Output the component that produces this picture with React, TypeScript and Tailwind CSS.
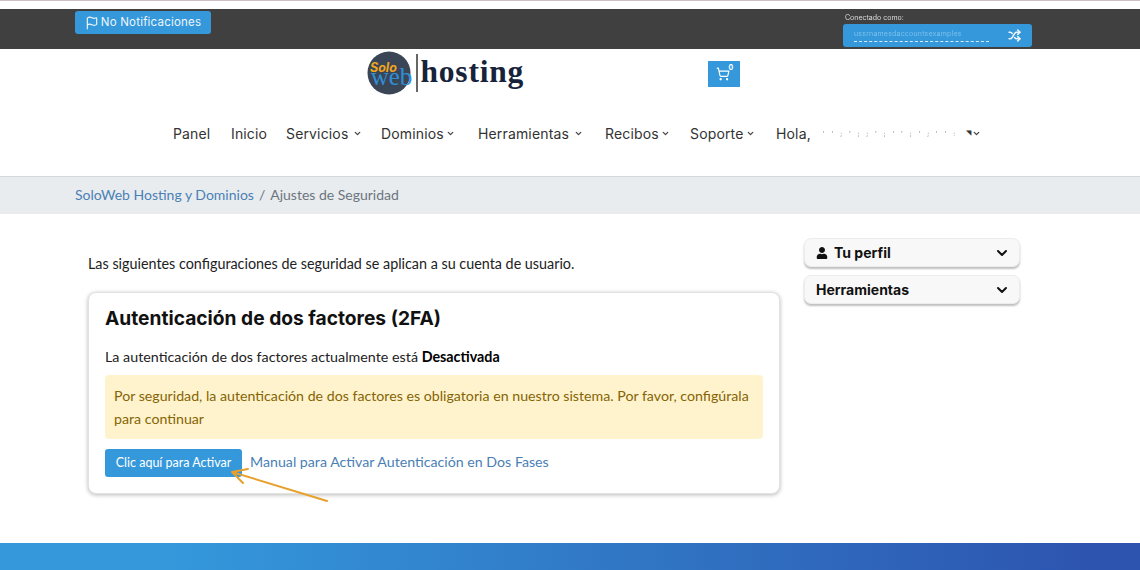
import React from "react";
import { ChevronDown, Flag, Shuffle, ShoppingCart } from "lucide-react";
import { FaUser } from "react-icons/fa";

const Caret = () => (
  <ChevronDown className="w-[9px] h-[9px] text-[#444] shrink-0" strokeWidth={3.5} />
);

/////////////////////////////////////
// COMPONENT: TOP BAR
/////////////////////////////////////

const TopBar = () => (
  <div className="h-[40px] bg-[#404040] flex justify-between pl-[75px] pr-[108px] shrink-0">
    <button className="mt-[2px] h-[23px] w-[136px] rounded-[3px] bg-[#3498db] text-[#eef6fc] text-[11.5px] tracking-[0.2px] flex items-center justify-center gap-[2px] font-['Inter',sans-serif]">
      <Flag className="w-[14px] h-[14px]" strokeWidth={2} />
      No Notificaciones
    </button>
    <div className="w-[189px] pt-[4px]">
      <div className="text-[7px] leading-[9px] text-[#ddd] pl-[2px] font-['Inter',sans-serif] blur-[0.3px]">
        Conectado como:
      </div>
      <div className="mt-[2px] h-[23px] rounded-[3px] bg-[#3498db] flex items-center justify-between pl-[11px] pr-[11px]">
        <div className="w-[135px] h-[13px] border-b border-dashed border-[#dcebf7] text-[7px] leading-[10px] text-[#7cc0ec] tracking-[0.2px] overflow-hidden blur-[0.5px] font-['Inter',sans-serif]">
          ussrnamesdaccountsexamples
        </div>
        <Shuffle className="w-[13px] h-[13px] text-[#e8f3fb] blur-[0.4px]" strokeWidth={3} />
      </div>
    </div>
  </div>
);

/////////////////////////////////////
// COMPONENT: LOGO
/////////////////////////////////////

const Logo = () => (
  <div className="flex items-center h-[48px]">
    <svg width="50" height="46" viewBox="0 0 50 46">
      <circle cx="22" cy="23" r="21.5" fill="#3a4556" />
      <text x="24.5" y="35" textAnchor="middle" fontFamily="Liberation Serif, serif" fontSize="25" fill="#2f8fd6">
        web
      </text>
      <text x="3" y="22" fontFamily="Inter, sans-serif" fontStyle="italic" fontWeight="700" fontSize="12.5" fill="#f0a51e">
        Solo
      </text>
    </svg>
    <div className="w-[1.5px] h-[38px] bg-[#666] -ml-[1px]" />
    <span className="ml-[3px] -mt-[2px] text-[31.5px] leading-none font-bold text-[#16233a] font-['Liberation_Serif',serif] tracking-[0.8px]">
      hosting
    </span>
  </div>
);

/////////////////////////////////////
// COMPONENT: HEADER
/////////////////////////////////////

const Header = () => (
  <header className="h-[127px] shrink-0 bg-white flex flex-col">
    <div className="flex items-start h-[62px] pl-[367px]">
      <Logo />
      <button className="ml-[184px] mt-[12px] w-[32px] h-[26px] bg-[#3498db] flex items-center justify-center relative">
        <ShoppingCart className="w-[14px] h-[14px] text-white -ml-[3px]" strokeWidth={2} />
        <span className="absolute top-[2px] right-[7px] text-[7px] leading-[9px] font-bold text-white font-['Inter',sans-serif]">0</span>
      </button>
    </div>
    <nav className="mt-[13px] pl-[173px] flex items-center h-[18px] text-[14px] tracking-[0.15px] text-[#333] font-['Inter',sans-serif]">
      <span className="w-[58px]">Panel</span>
      <span className="w-[55px]">Inicio</span>
      <span className="w-[95px] flex items-center gap-[5px]">Servicios <Caret /></span>
      <span className="w-[97px] flex items-center gap-[2px]">Dominios <Caret /></span>
      <span className="w-[127px] flex items-center gap-[5px]">Herramientas <Caret /></span>
      <span className="w-[85px] flex items-center gap-[2px]">Recibos <Caret /></span>
      <span className="w-[86px] flex items-center gap-[2px]">Soporte <Caret /></span>
      <span>Hola,</span>
      <span className="ml-[12px] w-[143px] text-[6px] tracking-[2.6px] text-[#777] whitespace-nowrap overflow-hidden blur-[0.3px]">
        {"' ' ; ' ; ; ' ; ' ' ; ' ; ' ' :"}
      </span>
      <span className="text-[7px] text-[#333] mr-[1px]">◥</span>
      <Caret />
    </nav>
  </header>
);

/////////////////////////////////////
// COMPONENT: SIDE PANEL
/////////////////////////////////////

const SideItem = ({ label, icon }: { label: string; icon?: boolean }) => (
  <div className="h-[29px] rounded-[7px] bg-[#f8f8f8] border border-[#ececec] shadow-[0_2px_2px_rgba(0,0,0,0.25)] flex items-center justify-between pl-[11px] pr-[9px] text-[14px] font-bold text-[#111] font-['Inter',sans-serif]">
    <span className="flex items-center gap-[6px]">
      {icon && <FaUser className="w-[12px] h-[12px]" />}
      {label}
    </span>
    <ChevronDown className="w-[16px] h-[16px]" strokeWidth={3} />
  </div>
);

/////////////////////////////////////
// COMPONENT: APP
/////////////////////////////////////

const App = (): JSX.Element => {
  return (
    <div className="w-[1140px] h-[570px] overflow-hidden bg-white flex flex-col font-['Lato',sans-serif]">
      <div className="h-[1px] bg-[#cdbfc2] shrink-0" />
      <div className="h-[8px] shrink-0" />
      <TopBar />
      <Header />

      {/* breadcrumb */}
      <div className="h-[38px] shrink-0 bg-[#e9ecef] border-t border-[#d5d8dc] flex items-center pl-[75px] pb-[2px] text-[14px]">
        <span className="text-[#4a80b5]">SoloWeb Hosting y Dominios</span>
        <span className="mx-[5px] text-[#6c757d]">/</span>
        <span className="text-[#6c757d]">Ajustes de Seguridad</span>
      </div>

      <main className="flex-1 flex pl-[88px] pt-[24px]">
        <div className="w-[692px]">
          <p className="h-[54px] pt-[17px] text-[14.35px] leading-[18px] text-[#222]">
            Las siguientes configuraciones de seguridad se aplican a su cuenta de usuario.
          </p>
          <section className="relative h-[202px] rounded-[8px] border border-[#e2e2e2] shadow-[0_1px_4px_rgba(0,0,0,0.28)] px-[16px] pt-[13px] bg-white">
            <h2 className="text-[19.2px] leading-[24px] font-bold text-[#111] font-['Inter',sans-serif]">
              Autenticación de dos factores (2FA)
            </h2>
            <p className="mt-[18px] text-[14.3px] leading-[18px] text-[#222]">
              La autenticación de dos factores actualmente está <b className="text-black">Desactivada</b>
            </p>
            <div className="mt-[9px] h-[64px] rounded-[4px] bg-[#fff3cd] px-[9px] pt-[9px] text-[14.2px] leading-[23px] text-[#856404]">
              Por seguridad, la autenticación de dos factores es obligatoria en nuestro sistema. Por favor, configúrala para continuar
            </div>
            <div className="mt-[10px] flex items-center gap-[8px]">
              <button className="w-[137px] h-[28px] rounded-[3px] bg-[#3498db] text-white text-[12.5px]">
                Clic aquí para Activar
              </button>
              <a className="-mt-[2px] text-[14.2px] text-[#4a80b5]">
                Manual para Activar Autenticación en Dos Fases
              </a>
            </div>
            {/* hand-drawn arrow */}
            <svg className="absolute left-[130px] top-[165px]" width="120" height="50" viewBox="0 0 120 50" fill="none">
              <path d="M13 14 L108 43 M13 14 L29 11 M13 14 L24 25" stroke="#e8a02c" strokeWidth="2" strokeLinecap="round" />
            </svg>
          </section>
        </div>
        <aside className="ml-[24px] w-[216px] flex flex-col gap-[8px]">
          <SideItem label="Tu perfil" icon />
          <SideItem label="Herramientas" />
        </aside>
      </main>

      <footer className="h-[27px] shrink-0 bg-gradient-to-r from-[#3498db] from-[15%] to-[#2d55b0] to-[95%]" />
    </div>
  );
};

export default App;
